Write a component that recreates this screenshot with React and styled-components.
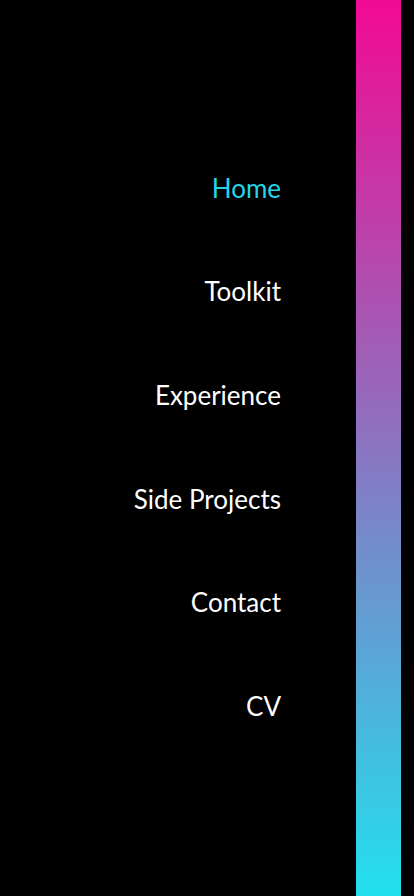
import React from "react"
import styled, { createGlobalStyle } from "styled-components"

const GlobalStyle = createGlobalStyle`
  html, body {
    margin: 0;
    padding: 0;
    background: #000;
  }
`

const Page = styled.div`
  display: flex;
  width: 414px;
  height: 896px;
  background: #000;
  overflow: hidden;
`

const Nav = styled.nav`
  flex: 1;
  display: flex;
  flex-direction: column;
  align-items: flex-end;
  padding-top: 136px;
  padding-right: 75px;
`

const NavItem = styled.a`
  display: flex;
  align-items: center;
  height: 103.6px;
  font-family: "Lato", "Liberation Sans", sans-serif;
  font-size: 26px;
  font-weight: 400;
  color: ${({ active }) => (active ? "#22d6e8" : "#fff")};
  text-decoration: none;
`

const GradientBar = styled.div`
  width: 45px;
  height: 100%;
  margin-right: 13px;
  background: linear-gradient(to bottom, #f20a93, #22e0ef);
`

const items = ["Home", "Toolkit", "Experience", "Side Projects", "Contact", "CV"]

export default function App() {
  return (
    <>
      <GlobalStyle />
      <Page>
        <Nav>
          {items.map((item, i) => (
            <NavItem key={item} active={i === 0 ? 1 : 0} href="#">
              {item}
            </NavItem>
          ))}
        </Nav>
        <GradientBar />
      </Page>
    </>
  )
}
